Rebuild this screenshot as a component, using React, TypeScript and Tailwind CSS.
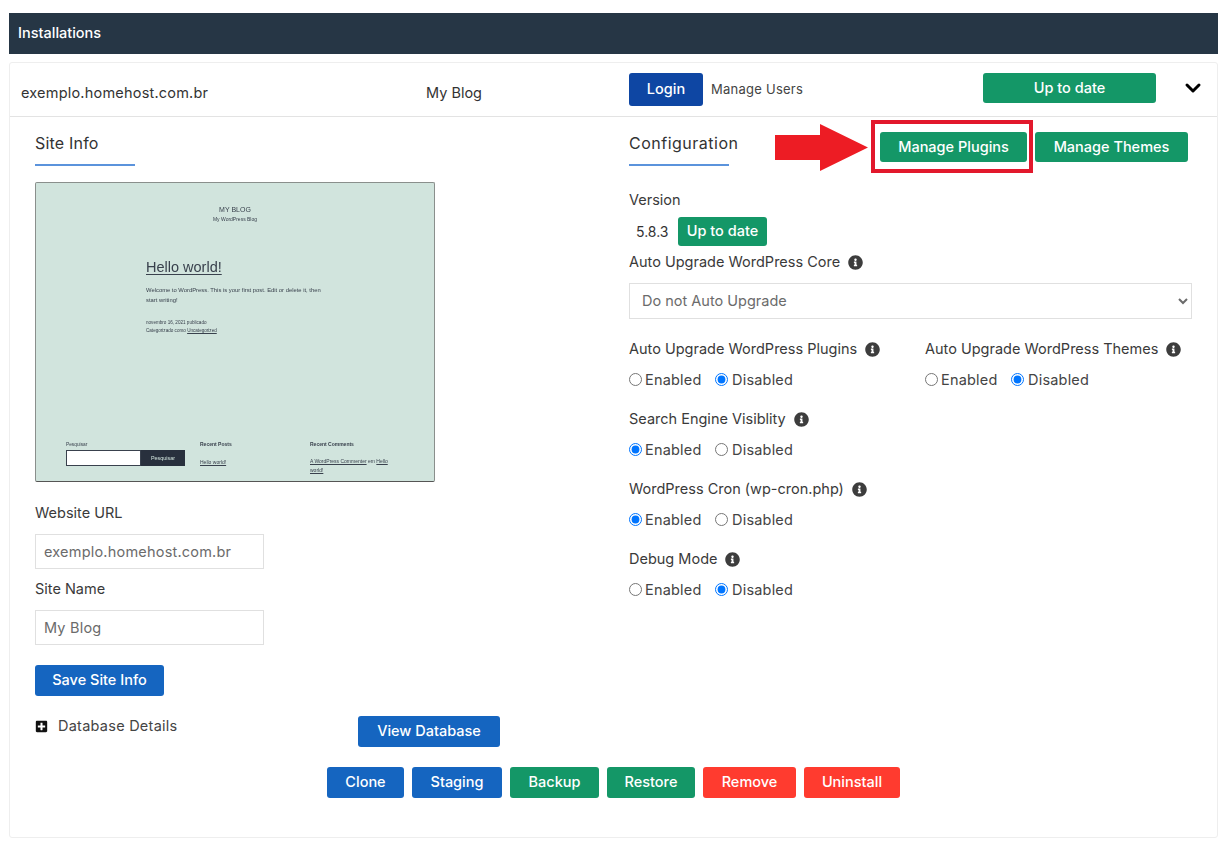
import { ReactNode } from "react";
import { ChevronDown } from "lucide-react";
import { FaInfoCircle, FaPlusSquare } from "react-icons/fa";

function Btn({
  children,
  className,
}: {
  children: ReactNode;
  className: string;
}) {
  return (
    <button
      className={`flex items-center justify-center rounded-[3px] pb-px text-[14.5px] font-medium text-white ${className}`}
    >
      {children}
    </button>
  );
}

function Heading({ title, wide }: { title: string; wide?: boolean }) {
  return (
    <div className="w-[100px]">
      <div
        className={`whitespace-nowrap text-[16px] leading-[22px] text-[#333] ${
          wide ? "tracking-[0.5px]" : "tracking-[0.2px]"
        }`}
      >
        {title}
      </div>
      <div className="mt-[10px] h-[2px] bg-[#5b93dc]" />
    </div>
  );
}

function Label({ children, info }: { children: ReactNode; info?: boolean }) {
  return (
    <div className="flex h-[22px] items-center gap-2 whitespace-nowrap text-[14.5px] text-[#3a3a3a]">
      {children}
      {info && <FaInfoCircle className="size-[15px] text-[#3d3d3d]" />}
    </div>
  );
}

function RadioGroup({ name, value }: { name: string; value: string }) {
  return (
    <div className="mt-2 flex h-[22px] items-center text-[14.5px] tracking-[0.2px] text-[#444]">
      <label className="flex w-[86px] items-center gap-[3px]">
        <input
          type="radio"
          name={name}
          defaultChecked={value === "enabled"}
          className="size-[13px]"
        />
        <span className="pt-[2px]">Enabled</span>
      </label>
      <label className="flex items-center gap-[4px]">
        <input
          type="radio"
          name={name}
          defaultChecked={value === "disabled"}
          className="size-[13px]"
        />
        <span className="pt-[2px]">Disabled</span>
      </label>
    </div>
  );
}

function Setting({
  label,
  name,
  value,
}: {
  label: string;
  name: string;
  value: string;
}) {
  return (
    <div>
      <Label info>{label}</Label>
      <RadioGroup name={name} value={value} />
    </div>
  );
}

function SitePreview() {
  return (
    <div className="mt-4 h-[300px] w-[400px] rounded-[2px] border border-[#8a8f8c] border-b-[#555] bg-[#d1e4dd] font-['Liberation_Sans',sans-serif] text-[#39414d]">
      <div className="flex h-full flex-col blur-[0.3px]">
        <div className="pt-[22px] text-center">
          <div className="text-[7px] leading-[9px]">MY BLOG</div>
          <div className="mt-[1px] text-[5px] leading-[8px]">My WordPress Blog</div>
        </div>
        <div className="pl-[110px] pt-[36px]">
          <div className="text-[14.5px] leading-[17px] underline decoration-[0.5px] underline-offset-2">
            Hello world!
          </div>
          <div className="mt-[9px] whitespace-nowrap text-[5.85px] leading-[10px]">
            Welcome to WordPress. This is your first post. Edit or delete it, then
            <br />
            start writing!
          </div>
          <div className="mt-[14px] text-[4.6px] leading-[8px]">
            novembro 16, 2021 publicado
            <br />
            Categorizado como <span className="underline">Uncategorized</span>
          </div>
        </div>
        <div className="mt-auto flex pb-[6px] pl-[30px]">
          <div className="w-[134px]">
            <div className="text-[4.8px] leading-[8px]">Pesquisar</div>
            <div className="mt-[1px] flex h-[16px] w-[119px]">
              <div className="w-[75px] border border-[#39414d] bg-white" />
              <div className="flex flex-1 items-center justify-center bg-[#28303d] text-[5.4px] text-[#d1e4dd]">
                Pesquisar
              </div>
            </div>
          </div>
          <div className="-mt-[1px] w-[110px]">
            <div className="text-[5px] font-bold leading-[8px]">Recent Posts</div>
            <div className="mt-[10px] text-[5px] leading-[8px] underline">
              Hello world!
            </div>
          </div>
          <div className="-mt-[1px] w-[85px]">
            <div className="text-[5px] font-bold leading-[8px]">Recent Comments</div>
            <div className="mt-[9px] text-[5px] leading-[9px]">
              <span className="underline">A WordPress Commenter</span> em{" "}
              <span className="underline">Hello</span>
              <br />
              <span className="underline">world!</span>
            </div>
          </div>
        </div>
      </div>
    </div>
  );
}

function TextField({ value }: { value: string }) {
  return (
    <input
      readOnly
      defaultValue={value}
      className="mt-[10px] block h-[35px] w-[229px] border border-[#e0e0e0] px-2 pb-px text-[14.5px] tracking-[0.2px] text-[#6b6b6b] outline-none"
    />
  );
}

export default function App() {
  return (
    <div className="min-h-[849px] bg-white pl-[9px] pr-[13px] pt-[13px] font-[Inter,sans-serif]">
      <div className="flex h-[41px] items-center bg-[#263645] pb-px pl-[9px] text-[14.5px] font-medium text-white">
        Installations
      </div>

      <div className="mt-2 rounded-[3px] border border-[#eeeeee]">
        {/* summary row */}
        <div className="flex h-[54px] items-center border-b border-[#e3e3e3] pl-[11px]">
          <div className="mt-[7px] w-[405px] text-[14.5px] tracking-[0.2px] text-[#333]">
            exemplo.homehost.com.br
          </div>
          <div className="mt-[7px] w-[203px] text-[14.5px] text-[#333]">My Blog</div>
          <Btn className="h-[33px] w-[74px] bg-[#0e46a3]">Login</Btn>
          <div className="ml-2 w-[272px] text-[13px] tracking-[0.25px] text-[#444]">
            Manage Users
          </div>
          <Btn className="mb-[3px] h-[30px] w-[173px] bg-[#149767]">Up to date</Btn>
          <ChevronDown className="mb-[3px] ml-[25px] size-[24px] text-black" strokeWidth={3} />
        </div>

        <div className="flex">
          {/* site info */}
          <div className="w-[619px] pl-[25px] pt-[15px]">
            <Heading title="Site Info" />
            <SitePreview />
            <div className="mt-5">
              <Label>Website URL</Label>
            </div>
            <TextField value="exemplo.homehost.com.br" />
            <div className="mt-[9px]">
              <Label>Site Name</Label>
            </div>
            <TextField value="My Blog" />
            <Btn className="mt-5 h-[31px] w-[129px] bg-[#1565c0]">Save Site Info</Btn>
            <div className="mt-5 flex items-start">
              <div className="flex h-[20px] w-[323px] items-center gap-[10px] text-[14.5px] tracking-[0.25px] text-[#444]">
                <FaPlusSquare className="size-[13px] text-[#111]" />
                Database Details
              </div>
              <Btn className="h-[31px] w-[142px] bg-[#1565c0]">View Database</Btn>
            </div>
          </div>

          {/* configuration */}
          <div className="w-[563px] pt-[15px]">
            <div className="flex items-start">
              <Heading title="Configuration" wide />
              <div className="relative ml-[151px]">
                <Btn className="h-[30px] w-[147px] bg-[#149767]">Manage Plugins</Btn>
                <div className="absolute -bottom-[11px] -left-[9px] -right-[6px] -top-[12px] border-4 border-[#e2182c]" />
                <svg
                  viewBox="0 0 93 47"
                  className="absolute -left-[105px] -top-[8px] h-[47px] w-[93px]"
                >
                  <path d="M0 11H45V0L93 23.5L45 47V36H0Z" fill="#ed1c24" />
                </svg>
              </div>
              <Btn className="ml-2 h-[30px] w-[153px] bg-[#149767]">Manage Themes</Btn>
            </div>

            <div className="mt-[23px]">
              <Label>Version</Label>
            </div>
            <div className="mt-[6px] flex items-center">
              <div className="w-[49px] pl-[7px] text-[14px] text-[#333]">5.8.3</div>
              <Btn className="h-[29px] w-[89px] bg-[#149767]">Up to date</Btn>
            </div>
            <div className="mt-[5px]">
              <Label info>Auto Upgrade WordPress Core</Label>
            </div>
            <select
              defaultValue="none"
              className="mt-[10px] block h-[36px] w-[563px] border border-[#e0e0e0] bg-white px-[8px] pb-px text-[14.5px] text-[#6b6b6b]"
            >
              <option value="none">Do not Auto Upgrade</option>
            </select>

            <div className="mt-[19px] flex flex-col gap-[18px]">
              <div className="flex">
                <div className="w-[296px]">
                  <Setting
                    label="Auto Upgrade WordPress Plugins"
                    name="plugins"
                    value="disabled"
                  />
                </div>
                <Setting
                  label="Auto Upgrade WordPress Themes"
                  name="themes"
                  value="disabled"
                />
              </div>
              <Setting label="Search Engine Visiblity" name="search" value="enabled" />
              <Setting label="WordPress Cron (wp-cron.php)" name="cron" value="enabled" />
              <Setting label="Debug Mode" name="debug" value="disabled" />
            </div>
          </div>
        </div>

        {/* actions */}
        <div className="mb-[39px] mt-5 flex justify-center gap-2">
          <Btn className="h-[31px] w-[77px] bg-[#1565c0]">Clone</Btn>
          <Btn className="h-[31px] w-[90px] bg-[#1565c0]">Staging</Btn>
          <Btn className="h-[31px] w-[89px] bg-[#149767]">Backup</Btn>
          <Btn className="h-[31px] w-[88px] bg-[#149767]">Restore</Btn>
          <Btn className="h-[31px] w-[93px] bg-[#ff3b2f]">Remove</Btn>
          <Btn className="h-[31px] w-[96px] bg-[#ff3b2f]">Uninstall</Btn>
        </div>
      </div>
    </div>
  );
}
